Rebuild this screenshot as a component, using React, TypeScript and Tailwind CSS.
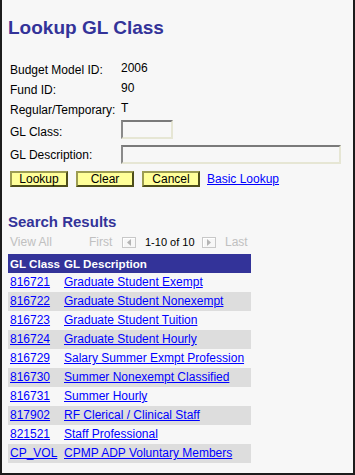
import React from "react";

const results = [
  { code: "816721", desc: "Graduate Student Exempt" },
  { code: "816722", desc: "Graduate Student Nonexempt" },
  { code: "816723", desc: "Graduate Student Tuition" },
  { code: "816724", desc: "Graduate Student Hourly" },
  { code: "816729", desc: "Salary Summer Exmpt Profession" },
  { code: "816730", desc: "Summer Nonexempt Classified" },
  { code: "816731", desc: "Summer Hourly" },
  { code: "817902", desc: "RF Clerical / Clinical Staff" },
  { code: "821521", desc: "Staff Professional" },
  { code: "CP_VOL", desc: "CPMP ADP Voluntary Members" },
];

const info = [
  { label: "Budget Model ID:", value: "2006" },
  { label: "Fund ID:", value: "90" },
  { label: "Regular/Temporary:", value: "T" },
];

const NavArrow = ({ dir }: { dir: "left" | "right" }) => (
  <svg width="14" height="11" viewBox="0 0 14 11" className="mt-[3px] block">
    <rect x="0.5" y="0.5" width="13" height="10" fill="#f7f7f7" stroke="#c8c8c8" />
    <line x1="1" y1="1.5" x2="13" y2="1.5" stroke="#ffffff" />
    <line x1="1.5" y1="1" x2="1.5" y2="10" stroke="#ffffff" />
    {dir === "left" ? (
      <polygon points="9,2 9,9 5,5.5" fill="#b4b4b4" />
    ) : (
      <polygon points="5,2 5,9 9,5.5" fill="#b4b4b4" />
    )}
  </svg>
);

const YellowButton = ({ children }: { children: React.ReactNode }) => (
  <button className="w-[58px] h-[16px] bg-[#ffff99] border-2 border-t-[#9c9c52] border-l-[#9c9c52] border-b-[#4d4d1a] border-r-[#4d4d1a] text-[12px] leading-[12px] text-black flex items-center justify-center">
    {children}
  </button>
);

const inputCls =
  "h-[19px] bg-[#f7f7f7] border-2 border-t-[#7a7a7a] border-l-[#8a8a8a] border-b-[#e6e6d4] border-r-[#e6e6d4]";

const App = () => {
  return (
    <div className="h-[475px] w-[355px] overflow-hidden bg-[#f7f7f7] border-l-2 border-r-2 border-b-2 border-[#1c1c1c] pl-[6px] pt-[17px] font-['Liberation_Sans',Arial,sans-serif] text-black">
      <h1 className="text-[19px] leading-[22px] font-bold text-[#333399]">Lookup GL Class</h1>

      <div className="mt-[21px] pl-[2px] text-[12px]">
        {info.map((row) => (
          <div key={row.label} className="flex h-[20px] items-start">
            <span className="w-[111px] leading-[20px] whitespace-nowrap">{row.label}</span>
            <span className="leading-[16px]">{row.value}</span>
          </div>
        ))}

        <div className="flex h-[19px] items-start">
          <span className="w-[111px] pt-[5px] leading-[14px]">GL Class:</span>
          <input className={`${inputCls} w-[52px]`} />
        </div>
        <div className="mt-[6px] flex h-[19px] items-start">
          <span className="w-[111px] pt-[3px] leading-[14px]">GL Description:</span>
          <input className={`${inputCls} w-[220px]`} />
        </div>

        <div className="mt-[7px] flex items-center gap-[8px]">
          <YellowButton>Lookup</YellowButton>
          <YellowButton>Clear</YellowButton>
          <YellowButton>Cancel</YellowButton>
          <a href="#" className="ml-[-1px] text-[#0000ff] underline leading-[16px]">
            Basic Lookup
          </a>
        </div>
      </div>

      <h2 className="mt-[26px] text-[15px] leading-[18px] font-bold text-[#333399]">Search Results</h2>

      <div className="mt-[3px] flex h-[20px] items-start pl-[2px] text-[12px] leading-[16px]">
        <span className="w-[79px] text-[#c0c0c0]">View All</span>
        <span className="w-[33px] text-[#c0c0c0]">First</span>
        <NavArrow dir="left" />
        <span className="ml-[9px] w-[57px] text-[11px]">1-10 of 10</span>
        <NavArrow dir="right" />
        <span className="ml-[9px] text-[#c0c0c0]">Last</span>
      </div>

      <div className="w-[243px] text-[12px] leading-[19px]">
        <div className="flex h-[19px] bg-[#333399] text-[11.6px] font-bold text-white">
          <span className="w-[56px] pl-[2px]">GL Class</span>
          <span>GL Description</span>
        </div>
        {results.map((r, i) => (
          <div key={r.code} className={`flex h-[19px] ${i % 2 === 1 ? "bg-[#dddddd]" : ""}`}>
            <span className="w-[56px] pl-[2px]">
              <a href="#" className="text-[#0000ff] underline">
                {r.code}
              </a>
            </span>
            <a href="#" className="text-[#0000ff] underline whitespace-nowrap">
              {r.desc}
            </a>
          </div>
        ))}
      </div>
    </div>
  );
};

export default App;
